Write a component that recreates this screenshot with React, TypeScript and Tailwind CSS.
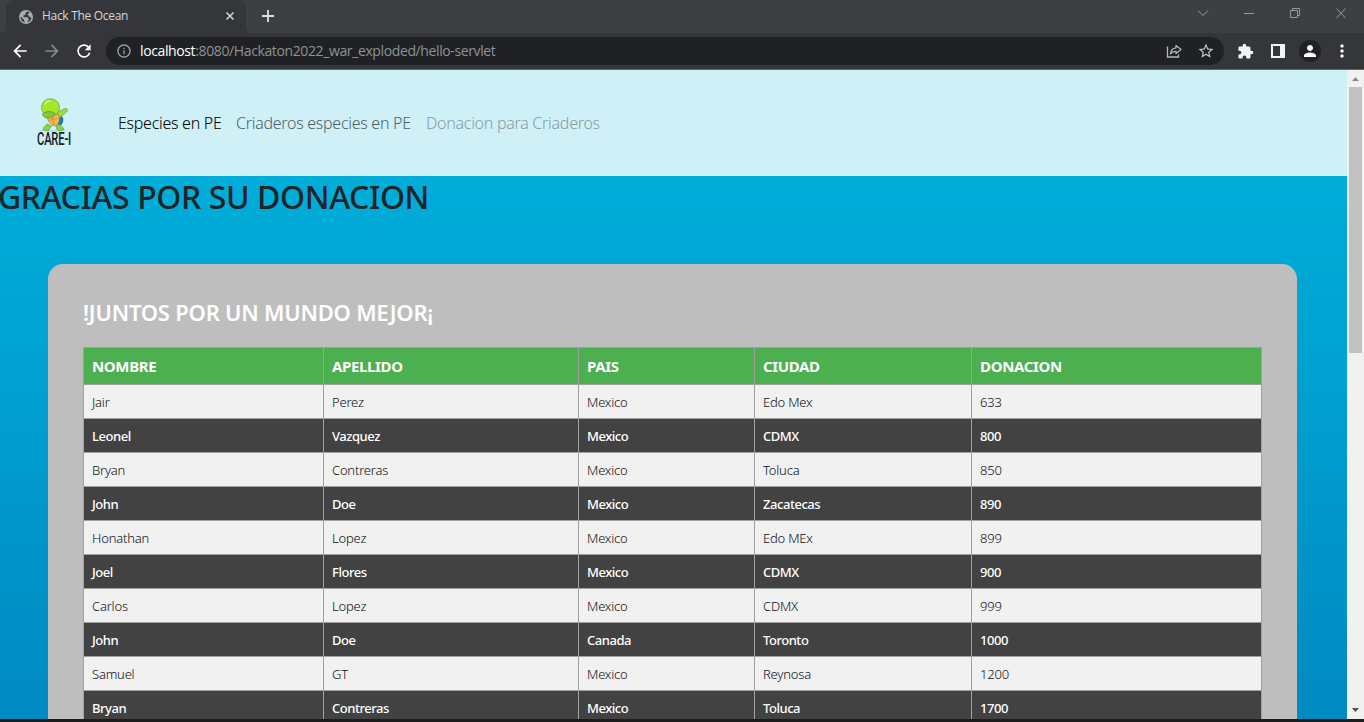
import { MdExtension, MdStarBorder, MdOutlineInfo, MdArrowBack, MdArrowForward, MdRefresh, MdPerson, MdMoreVert } from "react-icons/md";

const rows: string[][] = [
  ["Jair", "Perez", "Mexico", "Edo Mex", "633"],
  ["Leonel", "Vazquez", "Mexico", "CDMX", "800"],
  ["Bryan", "Contreras", "Mexico", "Toluca", "850"],
  ["John", "Doe", "Mexico", "Zacatecas", "890"],
  ["Honathan", "Lopez", "Mexico", "Edo MEx", "899"],
  ["Joel", "Flores", "Mexico", "CDMX", "900"],
  ["Carlos", "Lopez", "Mexico", "CDMX", "999"],
  ["John", "Doe", "Canada", "Toronto", "1000"],
  ["Samuel", "GT", "Mexico", "Reynosa", "1200"],
  ["Bryan", "Contreras", "Mexico", "Toluca", "1700"],
];

const headings = ["NOMBRE", "APELLIDO", "PAIS", "CIUDAD", "DONACION"];

function TabStrip() {
  return (
    <div className="flex h-[33px] items-stretch bg-[#3c4043]">
      <div className="flex w-1.5 items-end bg-[#35363a]"><div className="h-full w-full rounded-br-md bg-[#3c4043]" /></div>
      <div className="flex w-[240px] items-center rounded-t-lg bg-[#35363a] pl-[13px] pr-2.5">
        <svg className="size-[14px]" viewBox="0 0 14 14">
          <circle cx="7" cy="7" r="7" fill="#a9acb0" />
          <path d="M8 1.600L6.500 3v1.500L4.500 5.500v1.800h4l1 1.200v1.700l-1.500 2C10.500 12 12.400 9.800 12.400 7.500L11 7.200 9.800 5.500h-1L9 4l1.500-1.500C9.800 1.800 8.800 1.500 8 1.600zM1.500 6.500L5 9.800v1l1.200 1.600C3.300 12 1.300 9.500 1.500 6.500z" fill="#3b3c40" />
        </svg>
        <span className="-mt-0.5 ml-[9px] flex-1 text-[12px] tracking-[-0.3px] text-[#d5d7da]">Hack The Ocean</span>
        <svg className="-mt-px size-3" viewBox="0 0 12 12" stroke="#d5d7da" strokeWidth="1.5">
          <path d="M2.500 2.500l7 7M9.500 2.500l-7 7" />
        </svg>
      </div>
      <div className="w-1.5 bg-[#35363a]"><div className="h-full w-full rounded-bl-md bg-[#3c4043]" /></div>
      <svg className="ml-[9px] mt-[9px] size-[14px]" viewBox="0 0 14 14" stroke="#dfe1e5" strokeWidth="1.8">
        <path d="M7 1v12M1 7h12" />
      </svg>
      <svg className="ml-auto h-[33px] w-[168px]" viewBox="0 0 168 33" fill="none" stroke="#96999c" strokeWidth="1">
        <path d="M2 10.500l5 5 5-5" />
        <path d="M48 13.500h10" />
        <path d="M94.500 10.500h7v7h-7zM96.500 10v-1.500h7v7H102" />
        <path d="M140.500 8.500l9 9.500M149.500 8.500L140.500 18" />
      </svg>
    </div>
  );
}

function AddressBar() {
  return (
    <div className="flex h-[37px] items-center border-b border-[#5c6470] bg-[#35363a] pl-[10px] pr-[11px]">
      <MdArrowBack className="size-5 text-white" />
      <MdArrowForward className="ml-3 size-5 text-[#85878b]" />
      <MdRefresh className="ml-3 size-5 text-white" />
      <div className="ml-3 flex h-7 w-[1118px] items-center rounded-full bg-[#202124] pl-[10px] pr-[9px]">
        <MdOutlineInfo className="size-4 text-[#9aa0a6]" />
        <span className="-mt-0.5 ml-2 text-[14px] tracking-[-0.38px] text-[#8f9297]">
          <span className="text-white">localhost</span>:8080/Hackaton2022_war_exploded/hello-servlet
        </span>
        <svg className="ml-auto size-4" viewBox="0 0 16 16" fill="none" stroke="#b4b7bb" strokeWidth="1.300">
          <path d="M1.500 3.500v10.500h11v-2.500" />
          <path d="M10 2.500l5 4-5 4V8.300C7.500 8.300 5.800 9 4.500 11c.2-3.500 2-5.700 5.500-6.200z" strokeLinejoin="round" />
        </svg>
        <MdStarBorder className="ml-[15px] size-[18px] text-[#c2c5c9]" />
      </div>
      <MdExtension className="ml-[13px] size-[17px] text-[#f1f3f4]" />
      <svg className="ml-[17px] size-[14px]" viewBox="0 0 14 14">
        <path fill="#f1f3f4" fillRule="evenodd" d="M0 0h14v14H0zM2 2v10h7V2z" />
      </svg>
      <span className="ml-[14px] flex size-[22px] items-center justify-center rounded-full bg-[#202124]">
        <MdPerson className="size-[18px] text-white" />
      </span>
      <MdMoreVert className="ml-[11px] size-5 shrink-0 text-white" />
    </div>
  );
}

function Logo() {
  return (
    <svg className="h-[54px] w-[40px]" viewBox="0 -2 40 54">
      <ellipse cx="18" cy="32.800" rx="14" ry=".8" fill="#a8d3e6" />
      <path d="M23 18c5-1 6 3 5 6s-3 4-5 4z" fill="#2877a5" />
      <g stroke="#4f9a32" strokeWidth=".6">
        <path d="M12 26l-4 4.500c0 2 2 2 5.500 2l3-4.500zM21 27l1 4.500c0 1.500 7 1.500 7-.5l-4-4.500z" fill="#8bd23d" />
        <path d="M19 16l10-5c3-1.500 4.500 1 2.500 3L23 21z" fill="#9ddd3a" />
        <ellipse cx="15.500" cy="9.500" rx="9" ry="8.800" fill="#a5e52d" />
      </g>
      <path d="M12 18l11-2c2.500 4 1.500 9-2 12-4 0-8-3-9-10z" fill="#f1b551" stroke="#ad713c" strokeWidth=".6" />
      <path d="M13 22.500l10-2M17 18l2 10" stroke="#c9853f" strokeWidth=".6" />
      <path d="M7.500 16c3-3 8-3 12-1 1 2-1 4-3 4-4 2-8 1-9-3z" fill="#82cb35" stroke="#4e9838" strokeWidth=".8" />
      <path d="M10 6.500c1-3 4-4 6-3" stroke="#d3f879" strokeWidth="1.500" fill="none" />
      <text x="2" y="46.500" textLength="34" lengthAdjust="spacingAndGlyphs" fontSize="17.500" fontFamily="Roboto, sans-serif" fontWeight="500" fill="#101b20">CARE-I</text>
    </svg>
  );
}

function DonationTable() {
  return (
    <div className="w-[1179px] border-r border-t border-[#a0a0a0]">
      <div className="grid h-[37px] grid-cols-[240px_255px_176px_217px_290px] border-b border-[#a0a0a0] bg-[#4caf50]">
        {headings.map((h) => (
          <div key={h} className="flex items-center border-l border-[#a0a0a0] pl-2 pt-px font-['Noto_Sans'] text-[15px] font-bold tracking-[-0.35px] text-white">{h}</div>
        ))}
      </div>
      {rows.map((row, i) => (
        <div
          key={i}
          className={
            i % 2
              ? "grid h-[34px] grid-cols-[240px_255px_176px_217px_290px] border-b border-[#a0a0a0] bg-[#424242] font-medium tracking-[-0.46px] text-white"
              : "grid h-[34px] grid-cols-[240px_255px_176px_217px_290px] border-b border-[#a0a0a0] bg-[#f1f1f1] font-light tracking-[-0.2px] text-[#0c1014]"
          }
        >
          {row.map((cell, j) => (
            <div key={j} className="flex items-center border-l border-[#a0a0a0] pl-2 pt-[3px] font-['Noto_Sans'] text-[13px]">{cell}</div>
          ))}
        </div>
      ))}
    </div>
  );
}

function Scrollbar() {
  return (
    <div className="flex h-full w-[17px] flex-col items-center bg-[#f1f1f1]">
      <svg className="h-[17px] w-[17px] shrink-0" viewBox="0 0 17 17"><path d="M5 11h7L8.500 7z" fill="#8b8b8b" /></svg>
      <div className="h-[266px] w-[13px] bg-[#c1c1c1]" />
      <svg className="mt-auto h-[17px] w-[17px] shrink-0" viewBox="0 0 17 17"><path d="M5 6h7l-3.500 4z" fill="#505050" /></svg>
    </div>
  );
}

export default function App() {
  return (
    <div className="flex h-[722px] w-[1364px] flex-col overflow-hidden bg-[#1c1c1d] font-['Open_Sans','Noto_Sans',sans-serif]">
      <TabStrip />
      <AddressBar />
      <div className="flex h-[649px] shrink-0 overflow-hidden">
        <main className="h-full w-[1347px] overflow-hidden bg-linear-to-b from-[#00b5dd] to-[#008ac2]">
          <nav className="flex h-[106px] items-center gap-4 bg-[#cff0f7] pl-[35px] font-['Noto_Sans'] text-[16px] font-light tracking-[-0.28px]">
            <Logo />
            <span className="ml-[27px] w-[102px] whitespace-nowrap text-black">Especies en PE</span>
            <span className="w-[174px] whitespace-nowrap text-[#4f6268]">Criaderos especies en PE</span>
            <span className="whitespace-nowrap text-[#859da3]">Donacion para Criaderos</span>
          </nav>
          <h1 className="-ml-0.5 h-[88px] whitespace-nowrap font-['Noto_Sans'] text-[32px] font-medium leading-[41px] tracking-[-0.4px] text-[#212529]">GRACIAS POR SU DONACION</h1>
          <section className="ml-12 h-[520px] w-[1249px] rounded-t-[15px] bg-[#bebebe] pl-[35px] pt-[33px]">
            <h2 className="h-[50px] font-['Noto_Sans'] text-[22px] font-semibold leading-[30px] tracking-[-0.22px] text-white">!JUNTOS POR UN MUNDO MEJOR¡</h2>
            <DonationTable />
          </section>
        </main>
        <Scrollbar />
      </div>
    </div>
  );
}
